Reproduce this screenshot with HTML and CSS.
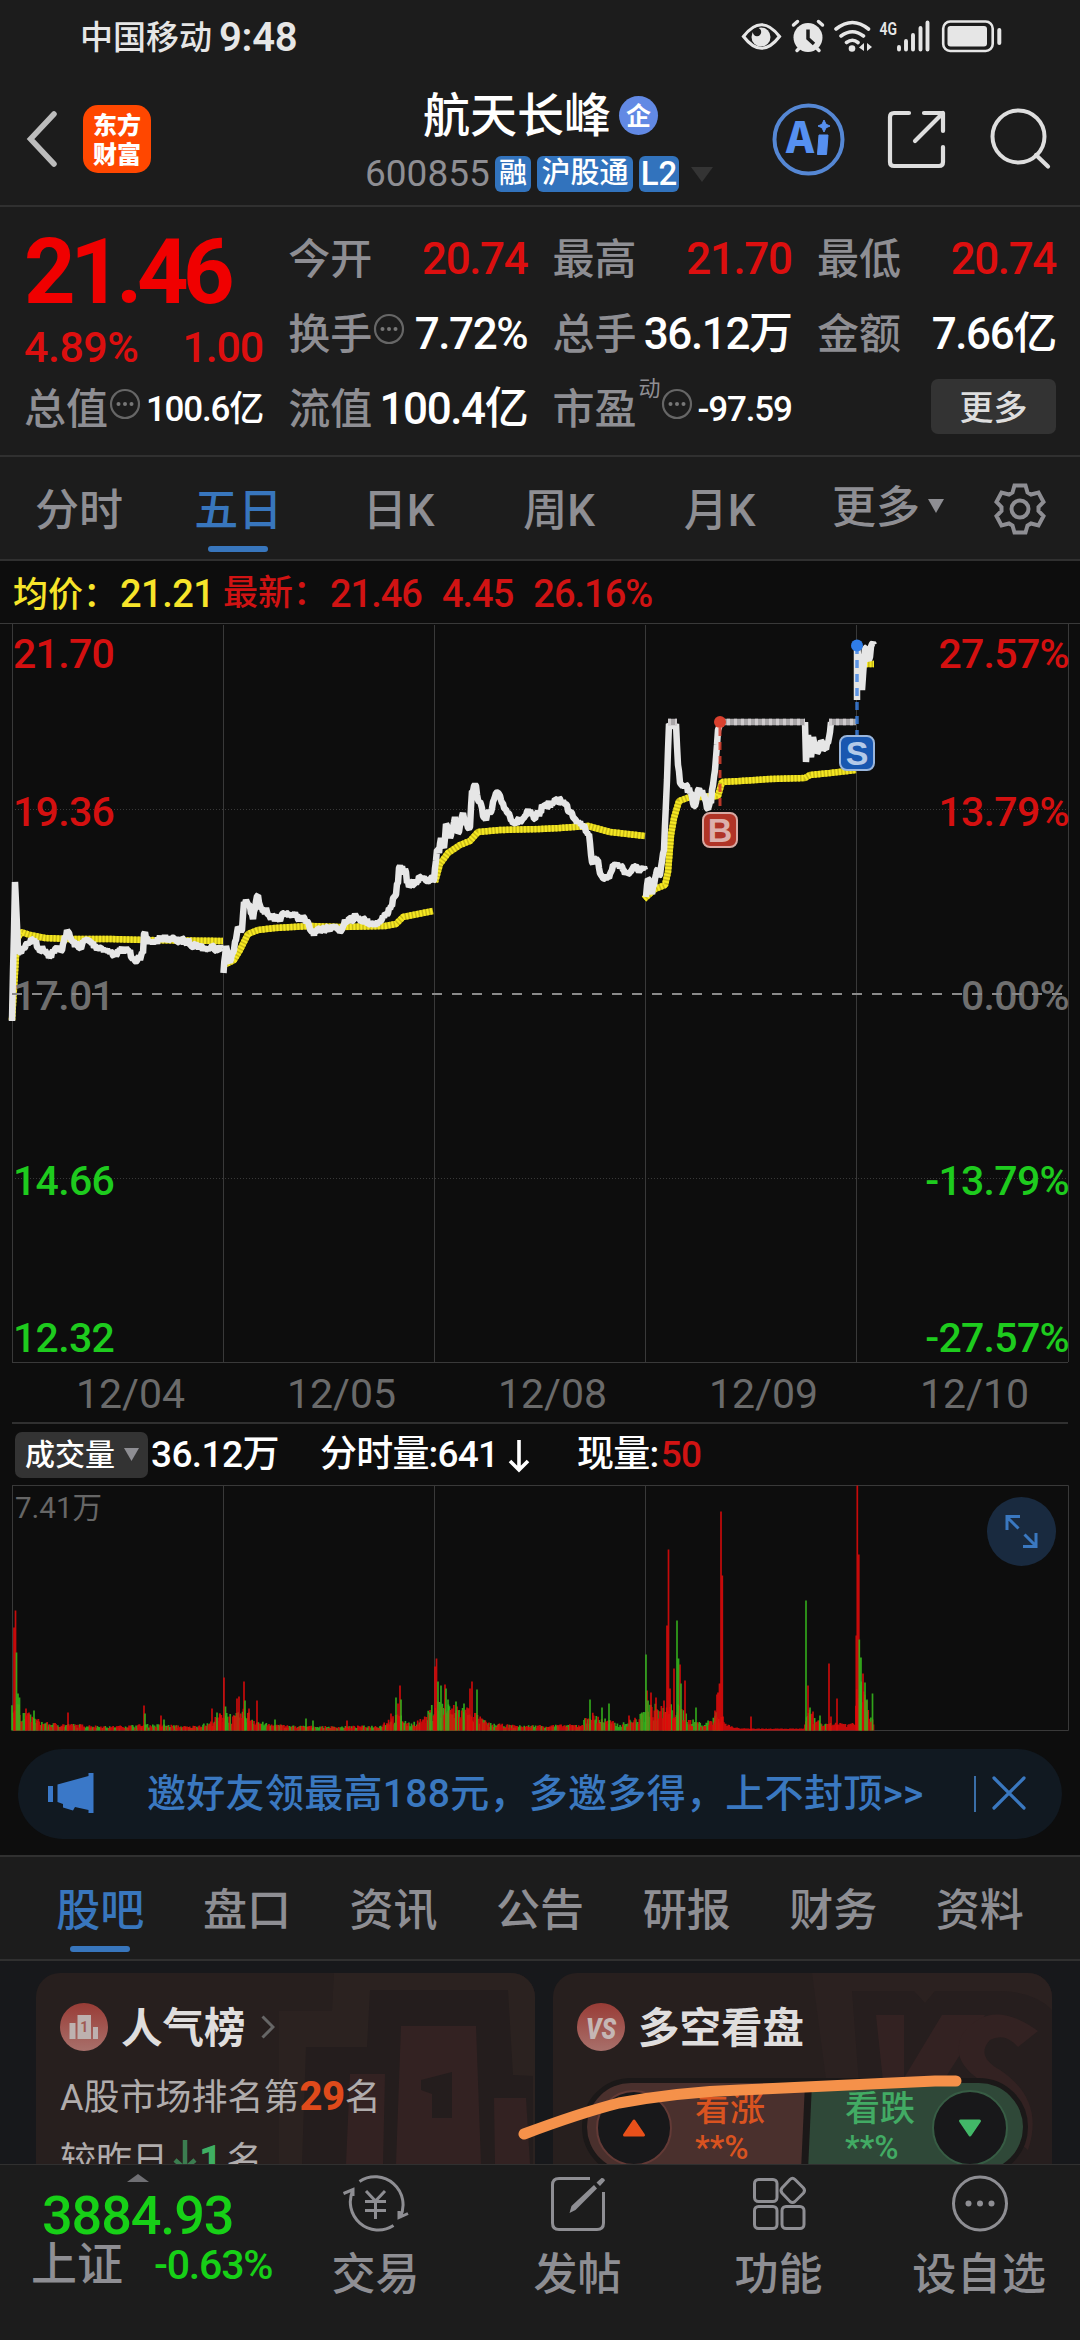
FILE: index.html
```html
<!DOCTYPE html>
<html lang="zh-CN">
<head>
<meta charset="utf-8">
<title>航天长峰 600855</title>
<link rel="stylesheet" href="styles.css">
</head>
<body>
<div class="app">

  <div class="status">
    <span class="carrier">中国移动</span><span class="clock">9:48</span>
    <svg class="status-icons" width="266" height="40" viewBox="740 16 266 40">
      <path d="M743.500 36.500Q761.500 13 779.500 36.500Q761.500 60 743.500 36.500Z" fill="none" stroke="#e6e6e6" stroke-width="3.200"/>
      <circle cx="761" cy="37" r="9.500" fill="#e6e6e6"/><circle cx="757" cy="32" r="4.200" fill="#1c1c1c"/>
      <circle cx="808" cy="37.500" r="14.500" fill="#e6e6e6"/>
      <path d="M793.500 25l4-3.500M822.500 25l-4-3.500M797 50.500l3-3M819 50.500l-3-3" stroke="#e6e6e6" stroke-width="3.500" stroke-linecap="round"/>
      <path d="M808 29.500v9l6 5.500" fill="none" stroke="#1c1c1c" stroke-width="3.500"/>
      <path d="M836 29q16.500-13 32.500 0M841 36q11.500-8.500 22.500 0M846.500 42.500q6-4.500 11.500 0" fill="none" stroke="#e6e6e6" stroke-width="3.600" stroke-linecap="round"/>
      <circle cx="852" cy="48.500" r="3.300" fill="#e6e6e6"/>
      <path d="M864 43v8l-5-3.500zM867 43v8l5-4z" fill="#e6e6e6"/>
      <text x="879.500" y="34.500" class="net" textLength="17.500" lengthAdjust="spacingAndGlyphs">4G</text>
      <path d="M899 47v2.500M906 41v8.500M913 35v14.500M920.500 28v21.500M927.500 22.500v27" stroke="#e6e6e6" stroke-width="3.900" stroke-linecap="round"/>
      <rect x="943.200" y="21.500" width="49.500" height="29.500" rx="7" fill="none" stroke="#e6e6e6" stroke-width="2.600"/>
      <rect x="947.500" y="26" width="39.500" height="20.500" rx="3" fill="#e6e6e6"/>
      <rect x="997.300" y="28" width="4" height="17" rx="2" fill="#e6e6e6"/>
    </svg>
  </div>

  <header class="header">
    <svg class="back" width="34" height="56" viewBox="0 0 34 56"><path d="M28 3L4.500 28L28 53" fill="none" stroke="#bcbcbc" stroke-width="5.500" stroke-linecap="round"/></svg>
    <div class="logo"><span>东方</span><span>财富</span></div>
    <div class="title-block">
      <div class="title-line"><h1>航天长峰</h1><span class="corp">企</span></div>
      <div class="code-line">
        <span class="code">600855</span>
        <span class="badge b-one">融</span><span class="badge b-three">沪股通</span><span class="badge b-l2">L2</span>
        <svg width="22" height="15" viewBox="0 0 22 15"><path d="M0 0h22L11 15z" fill="#343434"/></svg>
      </div>
    </div>
    <svg class="head-icons" width="282" height="80" viewBox="770 100 282 80">
      <circle cx="808.500" cy="139.500" r="34" fill="none" stroke="#5587d4" stroke-width="4"/>
      <text x="786" y="153" class="ai" textLength="28" lengthAdjust="spacingAndGlyphs">A</text>
      <path d="M819 135h9l-1.500 19.500h-9zM824 120l2 4.200 4 1.800-4 1.800-2 4.200-2-4.200-4-1.800 4-1.800z" fill="#5690f0" stroke="#5690f0" stroke-width="1"/>
      <path d="M909 113h-15q-4 0-4 4v45q0 4 4 4h45q4 0 4-4v-15M924 113h19v18M943 113l-28 28" fill="none" stroke="#dedede" stroke-width="4.200" stroke-linecap="round" stroke-linejoin="round"/>
      <circle cx="1018.500" cy="136.500" r="26" fill="none" stroke="#dedede" stroke-width="4"/><path d="M1036 155l12 11.500" stroke="#dedede" stroke-width="4.200" stroke-linecap="round"/>
    </svg>
  </header>

  <section class="quote">
    <div class="q-col">
      <div class="price">21.46</div>
      <div class="change"><span>4.89%</span><span>1.00</span></div>
      <div class="q-row"><span class="k">总值</span><svg class="info" width="32" height="32"><use href="#dots"/></svg><span class="v small">100.6亿</span></div>
    </div>
    <div class="q-col">
      <div class="q-row"><span class="k">今开</span><span class="v up">20.74</span></div>
      <div class="q-row"><span class="k">换手</span><svg class="info" width="32" height="32"><use href="#dots"/></svg><span class="v">7.72%</span></div>
      <div class="q-row"><span class="k">流值</span><span class="v">100.4亿</span></div>
    </div>
    <div class="q-col">
      <div class="q-row"><span class="k">最高</span><span class="v up">21.70</span></div>
      <div class="q-row"><span class="k">总手</span><span class="v">36.12万</span></div>
      <div class="q-row"><span class="k">市盈</span><sup class="dyn">动</sup><svg class="info tight" width="32" height="32"><use href="#dots"/></svg><span class="v small">-97.59</span></div>
    </div>
    <div class="q-col">
      <div class="q-row"><span class="k">最低</span><span class="v up">20.74</span></div>
      <div class="q-row"><span class="k">金额</span><span class="v">7.66亿</span></div>
      <div class="q-row"><button class="more">更多</button></div>
    </div>
    <svg class="defs" width="0" height="0"><symbol id="dots" viewBox="0 0 32 32"><circle cx="16" cy="16" r="14" fill="none" stroke="#666" stroke-width="2.200"/><circle cx="9.500" cy="16" r="2" fill="#777"/><circle cx="16" cy="16" r="2" fill="#777"/><circle cx="22.500" cy="16" r="2" fill="#777"/></symbol></svg>
  </section>

  <nav class="periods">
    <span>分时</span><span class="on">五日</span><span>日K</span><span>周K</span><span>月K</span>
    <span class="drop">更多<svg width="16" height="14" viewBox="0 0 16 14"><path d="M0 0h16L8 14z" fill="#8e8e93"/></svg></span>
    <svg class="gear" width="56" height="56" viewBox="-28 -28 56 56" fill="none" stroke="#8e8e93" stroke-width="4"><path d="M-5.500-23.500H5.500L7.500-16.500L11-14.500L18.500-16.500L23.500-7L18.500-2V2L23.500 7L18.500 16.500L11 14.500L7.500 16.500L5.500 23.500H-5.500L-7.500 16.500L-11 14.500L-18.500 16.500L-23.500 7L-18.500 2V-2L-23.500-7L-18.500-16.500L-11-14.500L-7.500-16.500Z"/><circle r="8.500"/></svg>
  </nav>

  <section class="chart">
    <div class="legend">
      <span class="avg"><b>均价：</b>21.21</span>
      <span class="last"><b>最新：</b><i>21.46</i><i>4.45</i><i>26.16%</i></span>
    </div>
    <svg class="plot" width="1080" height="740" viewBox="0 623 1080 740">
      <g class="grid">
        <path d="M0 623.500H1080M12.500 624V1362M223.500 625V1362M434.500 625V1362M645.500 625V1362M856.500 625V1362M1068.500 624V1362M12 1362.500H1068"/>
        <path d="M15 809.500H1068M15 1178.500H1068" stroke-dasharray="1 2"/>
      </g>
      <g id="lines"></g>
      <g class="axis">
        <text x="13" y="668" class="up">21.70</text><text x="13" y="826" class="up">19.36</text><text x="13" y="1010" class="flat">17.01</text><text x="13" y="1195" class="down">14.66</text><text x="13" y="1352" class="down">12.32</text>
        <g text-anchor="end"><text x="1069" y="668" class="up">27.57%</text><text x="1069" y="826" class="up">13.79%</text><text x="1069" y="1010" class="flat">0.00%</text><text x="1069" y="1195" class="down">-13.79%</text><text x="1069" y="1352" class="down">-27.57%</text></g>
      </g>
      <path d="M12 994H1064" stroke="#8a8a8a" stroke-width="2" stroke-dasharray="10 10"/>
      <g>
        <path d="M720 728V812" stroke="#d9402e" stroke-width="3" stroke-dasharray="8 6" opacity=".85"/>
        <circle cx="720" cy="722" r="6" fill="#d9402e"/>
        <rect x="703" y="813" width="34" height="34" rx="7" fill="#b03427" stroke="#d8a9a3" stroke-width="2"/>
        <text x="720" y="841.500" class="mark m-b">B</text>
        <path d="M857 650V735" stroke="#3b82e6" stroke-width="3.500" stroke-dasharray="8 6" stroke-dashoffset="4" opacity=".8"/>
        <circle cx="857" cy="645.500" r="6" fill="#2f7de8"/>
        <rect x="840" y="736" width="34" height="34" rx="7" fill="#1957b0" stroke="#9ab6dc" stroke-width="2"/>
        <text x="857" y="764.500" class="mark m-s">S</text>
      </g>
    </svg>
    <div class="dates"><span>12/04</span><span>12/05</span><span>12/08</span><span>12/09</span><span>12/10</span></div>
    <div class="vol-head">
      <span class="picker">成交量<svg width="15" height="13" viewBox="0 0 15 13"><path d="M0 0h15L7.500 13z" fill="#8e8e93"/></svg></span>
      <span class="v1">36.12万</span><span class="v2">分时量:641</span>
      <svg class="arrow" width="22" height="34" viewBox="0 0 22 34"><path d="M11 1v30M2 22l9 9 9-9" fill="none" stroke="#fff" stroke-width="3.600"/></svg>
      <span class="v3">现量:<em>50</em></span>
    </div>
    <div class="volume">
      <svg width="1080" height="247" viewBox="0 1485 1080 247">
        <path class="vgrid" d="M12 1485.500H1068.500V1730.500H12.500V1485.500M223.500 1486V1730M434.500 1486V1730M645.500 1486V1730"/>
        <text x="15" y="1518" class="vmax">7.41万</text>
        <g id="bars"></g>
        <circle cx="1021.500" cy="1531.500" r="34.500" fill="#192a3f"/>
        <path d="M1020 1516.500H1007V1530M1007 1517L1018.500 1528.500M1036 1533V1546.500H1023M1036 1546L1024.500 1534.500" fill="none" stroke="#3a78c0" stroke-width="3"/>
      </svg>
    </div>
    <div class="banner">
      <svg width="46" height="42" viewBox="0 0 46 42"><path d="M0 13h5v16H0zM9.500 11.500L40.500 3V0H45.500V40H40.500V37L27 34l-2 3.500-10-3V31L9.500 29z" fill="#3a78c8"/></svg>
      <p>邀好友领最高188元，多邀多得，上不封顶&gt;&gt;</p>
      <i></i>
      <svg class="close" width="34" height="34" viewBox="0 0 34 34"><path d="M2 2L32 32M32 2L2 32" stroke="#3a78c0" stroke-width="3.200" stroke-linecap="round"/></svg>
    </div>
  </section>

  <nav class="sections">
    <span class="on">股吧</span><span>盘口</span><span>资讯</span><span>公告</span><span>研报</span><span>财务</span><span>资料</span>
  </nav>

  <section class="feed">
    <article class="card">
      <svg class="water" width="260" height="191" viewBox="275 1973 260 191">
        <path d="M334 1973H535V2164H279V2011H332Z" fill="#2b2220"/>
        <path d="M370 1990H508L513 2075 533 2076V2164H302L306 2047H367Z" fill="#241d1d"/>
        <path d="M401 2026H476L481 2164H396ZM350 2074H385L383 2164H346ZM494 2098H526L530 2164H495Z" fill="#332222"/>
        <path d="M421 2080L452 2072V2118H432V2094L421 2090Z" fill="#241d1d"/>
      </svg>
      <div class="card-title">
        <svg width="48" height="48" viewBox="0 0 48 48"><defs><linearGradient id="rg" x1="0" y1="0" x2="0" y2="1"><stop offset="0" stop-color="#993c36"/><stop offset="1" stop-color="#a8706b"/></linearGradient></defs><circle cx="24" cy="24" r="24" fill="url(#rg)"/><path d="M9.500 20h6v16h-6zM17.500 12H31v24H17.500zM33 24h5v12h-5z" fill="#bdb1af"/><text x="24.200" y="28.500" class="one">1</text></svg>
        <h2>人气榜</h2>
        <svg class="chev" width="14" height="24" viewBox="0 0 14 24"><path d="M1.500 1.500L12 12L1.500 22.500" fill="none" stroke="#666" stroke-width="3"/></svg>
      </div>
      <p class="rank">A股市场排名第<b>29</b>名</p>
      <p class="rank delta">较昨日<svg width="24" height="34" viewBox="0 0 24 34"><path d="M12 2v29M2 22l10 9 10-9" fill="none" stroke="#3c7d50" stroke-width="4.500"/></svg><b>1</b><span>名</span></p>
    </article>
    <article class="card">
      <svg class="water" width="240" height="191" viewBox="812 1973 240 191">
        <path d="M812 1973H1052V2164H837Z" fill="#2b2120"/>
        <path d="M852 1991H914L925 2003 935 1991H1000Q1035 1992 1052 2010V2164H865Z" fill="#261e1e"/>
        <path d="M876 2015H904V2078L942 2015H985L925 2110H886Z" fill="#332222"/>
        <path d="M1038 2031L1018 2047Q1005 2032 990 2040Q975 2056 1000 2070Q1045 2100 1028 2150L980 2110Q1010 2095 980 2080Q950 2060 962 2035Q990 1996 1038 2031Z" fill="#332222"/>
      </svg>
      <div class="card-title">
        <svg width="48" height="48" viewBox="0 0 48 48"><circle cx="24" cy="24" r="24" fill="url(#rg)"/><text x="24" y="35.500" class="vs" textLength="30" lengthAdjust="spacingAndGlyphs">VS</text></svg>
        <h2>多空看盘</h2>
      </div>
      <div class="versus">
        <div class="side bull"><span class="dial"><svg width="24" height="20" viewBox="0 0 24 20"><path d="M12 3L21.500 17H2.500Z" fill="#e8501a" stroke="#e8501a" stroke-width="3" stroke-linejoin="round"/></svg></span><div class="vote">看涨<br><small>**%</small></div></div>
        <div class="side bear"><div class="vote">看跌<br><small>**%</small></div><span class="dial"><svg width="24" height="20" viewBox="0 0 24 20"><path d="M2.500 3H21.500L12 17Z" fill="#42b868" stroke="#42b868" stroke-width="3" stroke-linejoin="round"/></svg></span></div>
      </div>
    </article>
    <svg class="spark" width="450" height="70" viewBox="515 2070 450 70"><path d="M524 2134Q580 2113 619 2103Q680 2092 740 2090L935 2081H956" fill="none" stroke="#f5914a" stroke-width="11" stroke-linecap="round" stroke-linejoin="round"/></svg>
  </section>

  <footer class="tabbar">
    <div class="index">
      <svg width="22" height="8" viewBox="0 0 22 8"><path d="M0 8L11 0L22 8z" fill="#6f6f73"/></svg>
      <strong>3884.93</strong>
      <div class="index-row"><span>上证</span><em>-0.63%</em></div>
    </div>
    <div class="tab t1"><svg width="66" height="62" viewBox="343 2172 66 62" fill="none" stroke="#8e8e93" stroke-width="3"><path d="M359.500 2181.500A28 28 0 0 1 400 2217.500M399 2211V2217.500L408 2213.500M393.500 2225.500A28 28 0 0 1 353 2190M343.500 2193.500L353 2189.500V2196M366 2191l9.500 10 9.500-10M375.500 2201v18M365 2201.500h21M365 2210.500h21"/></svg><span>交易</span></div>
    <div class="tab t2"><svg width="62" height="62" viewBox="546 2172 62 62"><path d="M589 2178.500H558q-6.500 0-6.500 6.500v38q0 6.500 6.500 6.500h38q6.500 0 6.500-6.500V2192" fill="none" stroke="#8e8e93" stroke-width="3"/><path d="M593 2185l3 3.500-21.500 21.500-6 3 2-7zM595.500 2182.500l5-4.500q3-.5 3.500 2.500l-5 5.500z" fill="#8e8e93"/></svg><span>发帖</span></div>
    <div class="tab t3"><svg width="62" height="62" viewBox="747 2172 62 62" fill="none" stroke="#8e8e93" stroke-width="3"><rect x="753.500" y="2179.500" width="22.500" height="22" rx="4"/><rect x="753.500" y="2206.500" width="22.500" height="22" rx="4"/><rect x="781" y="2206.500" width="22" height="22" rx="4"/><path d="M789 2179.500q2.500-2.500 5 0l8.500 8.500q2 2.500 0 5l-8.500 8.500q-2.500 2-5 0l-8-8.500q-2-2.500 0-5z"/></svg><span>功能</span></div>
    <div class="tab t4"><svg width="62" height="62" viewBox="948 2172 62 62"><circle cx="979" cy="2203.500" r="26.500" fill="none" stroke="#8e8e93" stroke-width="3"/><circle cx="967.500" cy="2203.500" r="3" fill="#8e8e93"/><circle cx="979" cy="2203.500" r="3" fill="#8e8e93"/><circle cx="990.500" cy="2203.500" r="3" fill="#8e8e93"/></svg><span>设自选</span></div>
  </footer>
</div>
<script src="chart.js"></script>
</body>
</html>
```
FILE: styles.css
```css
* { box-sizing: border-box; margin: 0; padding: 0; }
body { width: 1080px; height: 2340px; overflow: hidden; background: #1c1c1c; color: #8e8e93; font-family: Roboto, "Noto Sans CJK SC", sans-serif; }
svg { display: block; flex: none; }
i, em { font-style: normal; }
.app { width: 1080px; height: 2340px; display: flex; flex-direction: column; overflow: hidden; white-space: nowrap; }
.app > * { flex: none; }

.status { height: 76px; display: flex; align-items: center; padding-left: 80px; color: #e6e6e6; }
.carrier { font-size: 33px; font-weight: 500; line-height: 40px; width: 139px; }
.clock { font-size: 40px; font-weight: 600; line-height: 40px; width: 80px; letter-spacing: -.3px; }
.status-icons { margin-left: auto; margin-right: 74px; margin-top: -4px; }
.net { font: 600 18px Roboto, sans-serif; fill: #e6e6e6; }

.header { height: 131px; display: flex; border-bottom: 2px solid #303030; }
.back { margin: 35px 0 0 26px; }
.logo { width: 68px; height: 68px; margin: 29px 0 0 23px; border-radius: 15px; background: #ff4700; color: #fff; font: 900 24px/29px "Noto Sans CJK SC", sans-serif; display: flex; flex-direction: column; align-items: center; padding-top: 4px; }
.title-block { width: 390px; margin: 12px 0 0 214px; }
.title-line { display: flex; align-items: center; height: 54px; padding-left: 58px; gap: 8px; }
h1 { font-size: 47px; font-weight: 500; line-height: 54px; color: #fff; position: relative; top: 1px; }
.corp { width: 39px; height: 39px; border-radius: 50%; background: #6289e4; color: #fff; font: 700 25px/37px "Noto Sans CJK SC", sans-serif; text-align: center; }
.code-line { display: flex; align-items: center; height: 36px; margin-top: 14px; gap: 6px; }
.code { font-size: 37px; line-height: 36px; width: 124px; }
.badge { height: 36px; border-radius: 6px; background: #3273bd; color: #fff; font-size: 29px; font-weight: 500; line-height: 35px; text-align: center; }
.b-one { width: 36px; font-size: 28px; }
.b-three { width: 96px; }
.b-l2 { width: 40px; font-size: 33px; }
.code-line svg { margin-left: 6px; }
.head-icons { margin: 24px 0 0 15px; }
.ai { font: 900 43px "Noto Sans CJK SC", sans-serif; fill: #5690f0; }

.quote { height: 250px; padding: 15px 24px 0; display: grid; grid-template-columns: repeat(4, 239px); column-gap: 25.300px; border-bottom: 2px solid #303030; }
.defs { position: absolute; }
.price { height: 100px; font-size: 90px; font-weight: 700; line-height: 102px; letter-spacing: -5.500px; color: #f00000; }
.change { height: 50px; display: flex; justify-content: space-between; color: #dc0f0f; font-size: 43px; font-weight: 500; line-height: 50px; }
.change span { letter-spacing: -.5px; }
.change span:last-child { letter-spacing: -1.200px; }
.q-row { height: 75px; display: flex; align-items: center; }
.k { font-size: 42px; line-height: 75px; font-weight: 500; }
.v { margin-left: auto; font-size: 44px; font-weight: 500; line-height: 75px; color: #fff; letter-spacing: -1.400px; }
.v.up { color: #dc0f0f; }
.v.small { font-size: 35px; letter-spacing: -1.200px; }
.info { margin: -11px 0 0 1px; }
.dyn { font-size: 22px; line-height: 24px; margin: -42px 0 0 2px; }
.info.tight { margin-left: 0; }
.more { margin-left: auto; width: 125px; height: 55px; border: 0; border-radius: 7px; background: #333; color: #dedede; font: 500 34px/50px "Noto Sans CJK SC", sans-serif; margin-top: -7px; }

.periods { height: 104px; display: flex; border-bottom: 2px solid #303030; font-size: 44px; font-weight: 500; line-height: 109px; }
.periods > span { width: 160.500px; text-align: center; position: relative; }
.periods > span:first-child { width: 158px; }
.periods .on, .sections .on { color: #3876bd; }
.periods .on::after, .sections .on::after { content: ""; position: absolute; left: 50%; margin-left: -30px; bottom: 7px; width: 60px; height: 6px; border-radius: 3px; background: #3876bd; }
.periods .drop { width: 156px; display: flex; justify-content: flex-start; align-items: center; margin-left: 32px; gap: 8px; }
.periods .drop svg { margin-top: -4px; }
.gear { margin: 24px 0 0 4px; }

.chart { background: #0d0d0d; height: 1296px; border-bottom: 2px solid #303030; display: flex; flex-direction: column; }
.chart > * { flex: none; }
.legend { height: 62px; padding-left: 13px; display: flex; font-size: 38px; font-weight: 500; line-height: 66px; letter-spacing: -.5px; }
.legend b { font-size: 35px; font-weight: 500; display: inline-block; width: 107px; letter-spacing: 0; }
.avg { color: #f7e42a; width: 210px; }
.last { color: #d01313; display: flex; }
.last i { margin-right: 20px; letter-spacing: -1px; }
.grid path, .vgrid { fill: none; stroke: #393939; stroke-width: 1px; }
.axis text { font: 500 41px Roboto, sans-serif; letter-spacing: -.7px; }
text.up { fill: #d41010; }
text.down { fill: #1ecb1e; }
text.flat { fill: #6f6f6f; }
.mark { font: 700 34px "Liberation Sans", sans-serif; text-anchor: middle; }
.m-b { fill: #dcb0ab; }
.m-s { fill: #b4c9e8; }
.white, .yellow, .yellow-dot, .limit, .limit-dot { fill: none; stroke: #e6e6e6; stroke-width: 6.500px; stroke-linejoin: bevel; }
.yellow { stroke: #c9bb18; stroke-width: 6.500px; }
.yellow-dot { stroke: #f5e822; stroke-width: 6.500px; stroke-dasharray: 2 1.500; }
.limit { stroke: #a9a6a8; }
.limit-dot { stroke: #cfcbcd; stroke-dasharray: 3 4; }
.dates { height: 61px; margin: 0 12px; padding-left: 13px; display: grid; grid-template-columns: repeat(5, 211px); border-bottom: 2px solid #303030; font-size: 41px; line-height: 63px; color: #6a6a6a; }
.dates span { text-align: center; }
.vol-head { height: 61px; display: flex; align-items: center; padding-left: 15px; color: #fff; font-size: 37px; font-weight: 500; line-height: 61px; }
.picker { width: 133px; height: 46px; border-radius: 7px; background: #333; font-size: 30px; line-height: 44px; padding-left: 10px; display: flex; align-items: center; gap: 9px; margin-right: 3px; }
.v1 { width: 169px; letter-spacing: -.6px; }
.v2 { letter-spacing: -.8px; width: 188px; }
.arrow { margin-top: 2px; }
.v3 { margin-left: 47px; letter-spacing: -.7px; }
.v3 em { color: #d01313; margin-left: 2px; }
.volume { height: 247px; }
.vmax { font: 400 29.500px Roboto, "Noto Sans CJK SC", sans-serif; fill: #666; }
.red { stroke: #e00a0a; }
.green { stroke: #35b81c; }
.red, .green { fill: none; stroke-width: 1.700px; opacity: .88; }
.banner { margin: 17px 18px 0; height: 90px; border-radius: 45px; background: #111921; color: #3a78c0; display: flex; align-items: center; padding-left: 30px; }
.banner p { font-size: 39px; font-weight: 500; line-height: 88px; margin-left: 53px; width: 808px; letter-spacing: .3px; }
.banner > i { width: 1.500px; height: 36px; background: #3a6ea8; margin: 0 16px 0 19px; }
.banner .close { margin-top: -3px; }

.sections { height: 104px; border-bottom: 2px solid #303030; padding-left: 27px; display: grid; grid-template-columns: repeat(7, 146.600px); font-size: 44px; font-weight: 500; line-height: 109px; }
.sections span { position: relative; height: 102px; text-align: center; }
.periods > span { height: 102px; }

.feed { position: relative; height: 204px; background: #17181b; padding: 12px 28px 0 36px; display: grid; grid-template-columns: 499px 499px; column-gap: 18px; overflow: hidden; border-bottom: 1px solid #303030; }
.card { position: relative; height: 300px; border-radius: 24px; background: #271f1e; overflow: hidden; padding: 27px 24px; }
.water { position: absolute; right: 0; top: 0; }
.card-title { position: relative; display: flex; align-items: center; height: 54px; }
h2 { font: 700 41.500px/54px "Noto Sans CJK SC", sans-serif; color: #dfdddd; margin-left: 13px; margin-top: -5px; }
.chev { margin-left: 15px; }
.one { font: 700 14px Roboto, sans-serif; fill: #a05a54; text-anchor: middle; }
.vs { font: italic 900 29px Roboto, sans-serif; fill: #c5b6b4; text-anchor: middle; }
.rank { position: relative; font-size: 36px; line-height: 60px; margin-top: 13px; color: #b0acac; }
.rank b { font-size: 40px; font-weight: 800; color: #df4a1b; letter-spacing: -.5px; }
.delta { display: flex; align-items: center; margin-top: 3px; }
.delta svg { margin: -12px 2px 0 5px; }
.delta b { color: #3fae62; }
.delta span { margin-left: 5px; }
.versus { position: relative; height: 98px; margin: 24px 0 0 5px; width: 446px; border: 5px solid #1b1818; border-radius: 49px; display: flex; overflow: hidden; background: #1b1818; }
.side { display: flex; align-items: center; position: relative; }
.bull { width: 218px; background: #4a302d; clip-path: polygon(0 0, 100% 0, calc(100% - 4px) 100%, 0 100%); }
.bear { width: 215px; margin-left: 3px; background: #2f4838; clip-path: polygon(4px 0, 100% 0, 100% 100%, 0 100%); }
.dial { flex: none; width: 76px; height: 76px; border-radius: 50%; background: #18181a; border: 2px solid #633a36; display: flex; align-items: center; justify-content: center; margin-left: 9px; margin-top: 2px; }
.bear .dial { border-color: #375c44; margin-left: 17px; }
.vote { font-size: 35px; line-height: 38px; color: #d95320; margin-left: 23px; padding-top: 3px; font-weight: 500; }
.bear .vote { color: #42ab64; margin-left: 37px; width: 70px; flex: none; }
.vote small { font-size: 33px; }
.spark { position: absolute; left: 515px; top: 109px; }

.tabbar { height: 175px; position: relative; display: grid; grid-template-columns: 274px 203px 201px 201px 201px; }
.index { padding: 9px 0 0 31px; }
.index > svg { margin-left: 96px; }
.index strong { display: block; font-size: 54px; font-weight: 500; line-height: 68px; color: #17d017; margin-left: 11px; letter-spacing: -1.100px; }
.index-row { display: flex; align-items: center; height: 30px; }
.index-row span { font-size: 46px; width: 123px; line-height: 30px; margin-top: -2px; font-weight: 500; }
.index-row em { font-size: 41px; font-weight: 500; color: #17d017; letter-spacing: -1.200px; }
.tab { display: flex; flex-direction: column; align-items: center; padding-top: 7px; font-size: 44px; font-weight: 500; line-height: 82px; }
.tab:last-child span { letter-spacing: .8px; }
```
FILE: chart.js
```js
const NS = 'http://www.w3.org/2000/svg';
let seed = 7;
const rnd = () => (seed = (seed * 16807) % 2147483647) / 2147483647;

function add(parent, cls, d) {
  const p = document.createElementNS(NS, 'path');
  p.setAttribute('class', cls);
  p.setAttribute('d', d);
  document.getElementById(parent).appendChild(p);
}
const pairs = s => s.trim().split(/\s+/).map(p => p.split(',').map(Number));
const line = pts => 'M' + pts.map(p => p[0].toFixed(1) + ' ' + p[1].toFixed(1)).join('L');

// Inserts minute ticks with small jitter between the key prices.
function ticks(pts) {
  const out = [pts[0]];
  for (let i = 1; i < pts.length; i++) {
    const [x0, y0] = pts[i - 1], [x1, y1] = pts[i];
    const n = Math.max(1, Math.round((x1 - x0) / 1));
    for (let k = 1; k < n; k++) out.push([x0 + (x1 - x0) * k / n, y0 + (y1 - y0) * k / n + (rnd() - .5) * 7]);
    out.push(pts[i]);
  }
  return out;
}

[
  '12,1020 17,940 21,932 30,935 45,938 70,939 110,939 145,940 223,941',
  '224,965 234,960 240,950 248,934 258,930 275,928 310,926 340,927 385,926 396,924 403,917 433,911',
  '435,882 440,864 448,853 460,845 470,841 478,832 500,830 540,829 560,828 588,826 610,832 645,836',
  '644,899 655,889 665,885 668,872 671,835 674,818 679,801 690,797 700,797 718,796 722,782 740,781 770,779 805,778 810,775 830,773 856,770',
  '866,664 874,664'
].forEach(s => { add('lines', 'yellow', line(pairs(s))); add('lines', 'yellow-dot', line(pairs(s))); });

[
  '12,1021 15,882 18,950 21,953 23,948 27,943 34,939 38,948 45,950 50,956 55,949 61,951 65,936 68,932 72,941 79,948 86,940 91,942 96,947 103,948 110,953 117,954 121,950 128,950 134,958 140,960 143,953 144,934 148,941 155,942 162,938 170,939 179,941 189,942 198,946 207,949 214,947 222,948',
  '223.5,973 226,946 230,962 234,950 238,927 242,930 244,902 249,905 253,919 257,896 262,908 267,912 275,921 281,917 288,913 296,916 305,920 312,932 320,932 327,927 333,926 341,931 345,920 351,918 358,917 365,921 374,924 381,921 386,914 391,906 395,896 398,883 399,868 406,872 407,883 413,885 422,876 429,881 434,880 437,850 439,853 441,838 444,848 446,824 450,838 455,817 458,833 463,813 467,824 470,827 472,791 476,786 479,802 485,818 491,812 496,793 501,800 508,813 515,823 522,820 529,812 535,819 540,812 543,806 554,803 560,799 564,803 571,812 578,821 585,828 589,834 592,862 597,860 601,875 609,878 613,865 619,865 628,874 633,868 645,870',
  '646,897 648,879 652,894 657,870 660,875 664,850 667,780 669,724 676,724 678,765 680,783 686,785 690,793 695,806 698,790 704,794 708,809 711,803 712,790 715,770 718,730 720,722',
  '805,722 806,762 808,735 811,757 813,737 817,753 822,742 824,749 828,743 831,722',
  '857,700 857,645 862,690 865,648 869,660 872,644 874,645'
].forEach(s => add('lines', 'white', line(ticks(pairs(s)))));
['M668 722H677', 'M720 722H805', 'M829 722H856'].forEach(d => { add('lines', 'limit', d); add('lines', 'limit-dot', d); });

// Ordinary turnover level by x, then the bars that stand out of it.
const level = pairs('12,30 20,22 30,14 45,7 60,6 80,5 110,3 140,5 150,5 165,5 190,3 210,7 218,14 226,20 233,13 245,20 255,11 265,6 290,4 330,3 380,4 392,14 402,14 408,6 425,12 436,30 450,24 470,22 480,12 490,6 520,4 580,5 590,17 605,11 620,5 640,14 650,25 665,22 675,25 684,20 690,10 705,6 716,16 722,16 727,5 735,2 755,1 804,1 808,20 815,10 828,5 835,8 845,5 855,7 858,60 862,45 868,20 874,8');
const peaks = '14,103,r 15.5,120,r 16.5,78,g 18,37,g 19.5,33,g 26,22,r 29,18,r 34,20,g 68,18,r 144,25,r 145,17,g 161,15,r 164,11,g 212,22,r 217,18,g 220,17,r 224,53,r 225.5,24,g 237,32,r 239,34,r 244,49,r 245,30,g 249,22,r 257,30,r 275,11,g 306,12,g 313,10,g 347,10,r 391,17,r 396,33,g 398,27,r 400,45,r 401,31,g 430,18,g 435,64,r 436.5,72,r 438,49,g 441,45,g 445,46,r 446,42,g 448,31,g 456,29,g 457,24,r 464,27,g 470,42,r 472,49,r 477,41,g 590,31,g 602,23,g 609,27,g 629,15,r 642,18,g 646,76,g 647,40,r 648,30,g 651,38,r 656,33,r 664,30,r 667,105,r 668.5,181,r 670,42,r 674,62,r 677,110,g 678.5,72,g 680,66,r 681,47,g 685,50,r 696,23,g 715,20,r 717,36,r 718,38,r 719.5,47,r 721,219,r 722.3,155,r 751,14,r 806,130,g 808,45,r 810,23,g 813,19,r 820,15,g 829,67,r 831,14,r 837,32,r 856.3,95,r 857.3,245,r 858.8,176,r 859.3,91,g 861,73,g 863,57,r 865,48,g 867,31,g 872.5,37,g';

let red = '', green = '', seg = 0;
const bar = (x, h, up) => {
  const d = `M${x.toFixed(1)} 1730.500v${(-h).toFixed(1)}`;
  if (up) red += d; else green += d;
};
for (let x = 12; x < 874; x += .88) {
  while (seg < level.length - 2 && level[seg + 1][0] < x) seg++;
  const [a, b] = [level[seg], level[seg + 1]];
  const mean = a[1] + (b[1] - a[1]) * (x - a[0]) / (b[0] - a[0]);
  const onlyRed = (x > 722 && x < 805) || (x > 832 && x < 857);
  bar(x, 1 + mean * (.35 + rnd() * .75), onlyRed || rnd() > .5);
}
add('bars', 'green', green);
add('bars', 'red', red);
red = green = '';
peaks.split(' ').forEach(p => { const [x, h, c] = p.split(','); bar(+x, +h, c === 'r'); });
add('bars', 'red', red);
add('bars', 'green', green);
```
